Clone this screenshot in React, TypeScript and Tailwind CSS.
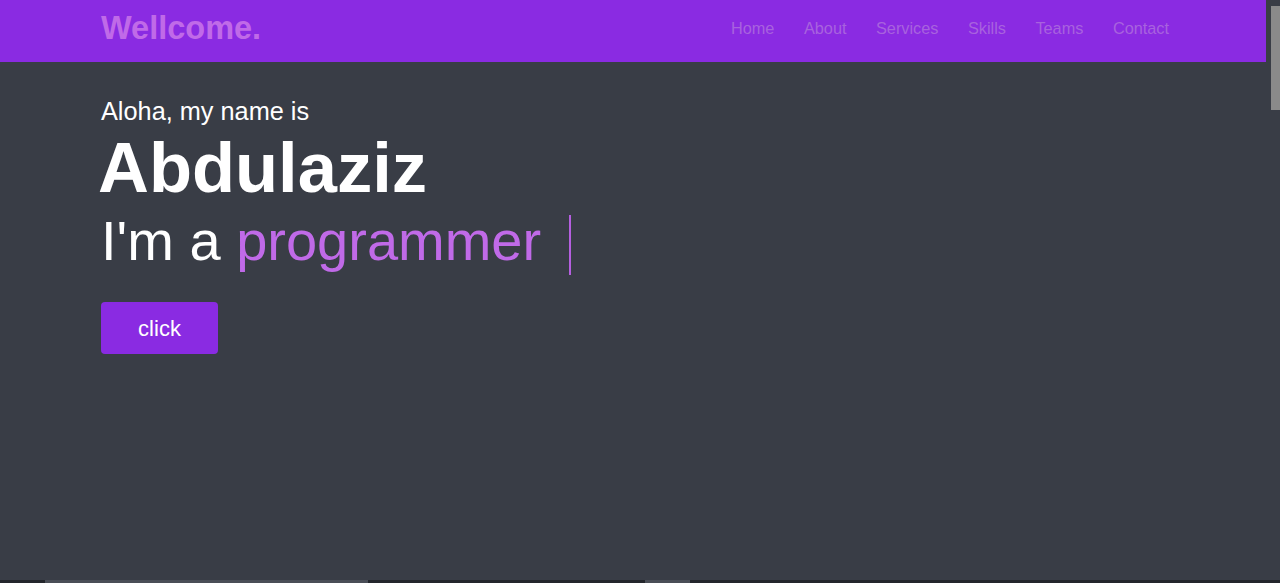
const links = ["Home", "About", "Services", "Skills", "Teams", "Contact"];

const App = () => {
  return (
    <div className="flex h-[583px] w-[1280px] flex-col overflow-hidden bg-[#393d46] font-['Liberation_Sans',Arial,sans-serif]">
      <div className="flex flex-1">
        <div className="flex flex-1 flex-col">
          <header className="flex h-[62px] items-center justify-between bg-[#8a2be2] pl-[101px] pr-[97px]">
            <span className="-mt-[5px] text-[32.5px] font-bold leading-none text-[#c06ae8]">
              Wellcome.
            </span>
            <nav className="-mt-[5px] flex gap-[29.5px] text-[16.3px] text-[#a862de]">
              {links.map((link) => (
                <a key={link} href="#">
                  {link}
                </a>
              ))}
            </nav>
          </header>

          <section className="flex flex-col items-start pl-[101px] pt-[35px] text-white">
            <p className="text-[25.3px] leading-[28px]">Aloha, my name is</p>
            <h1 className="-ml-[3px] mt-[8px] text-[70.5px] font-bold leading-[70px]">
              Abdulaziz
            </h1>
            <div className="mt-[3px] flex items-center text-[56px] leading-[64px]">
              <span>
                I'm a <span className="text-[#c06ae8]">programmer</span>
              </span>
              <span className="ml-[28px] mt-[9px] inline-block h-[60px] w-[2px] bg-[#b55fe0]" />
            </div>
            <button className="mt-[27px] h-[52px] w-[117px] rounded-[4px] bg-[#8a2be2] text-[22px] text-white">
              click
            </button>
          </section>
        </div>

        <div className="flex w-[14px] bg-[#393d46] pl-[5px] pt-[6px]">
          <div className="h-[104px] w-[9px] bg-[#8a8a8a]" />
        </div>
      </div>

      <div className="flex h-[3px]">
        <div className="w-[45px] bg-[#23262c]" />
        <div className="w-[323px] bg-[#4a4e57]" />
        <div className="w-[277px] bg-[#23262c]" />
        <div className="w-[45px] bg-[#4a4e57]" />
        <div className="flex-1 bg-[#23262c]" />
      </div>
    </div>
  );
};

export default App;
